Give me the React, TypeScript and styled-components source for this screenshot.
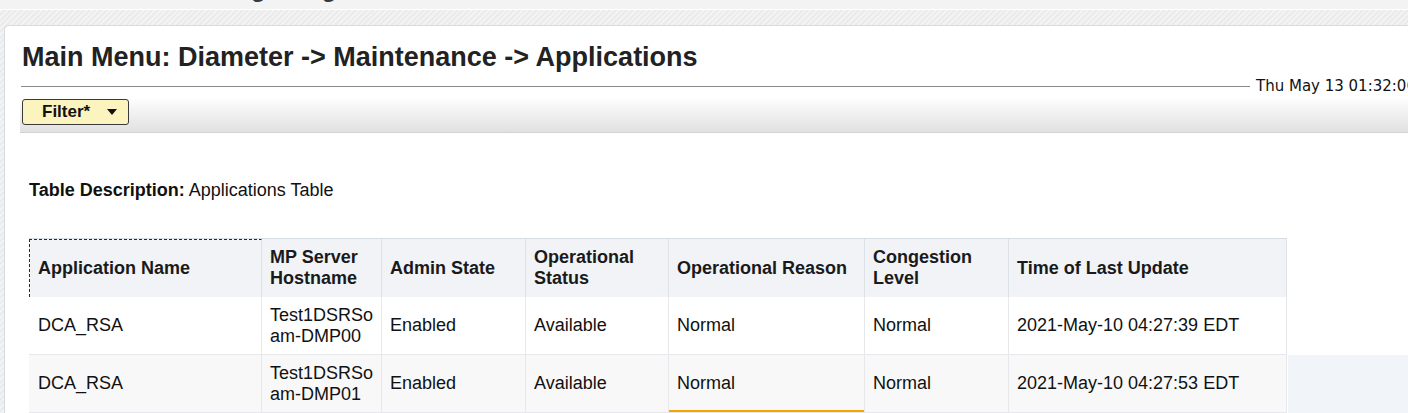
import React from "react";
import styled, { createGlobalStyle } from "styled-components";

const GlobalStyle = createGlobalStyle`
  html, body {
    margin: 0;
    padding: 0;
  }
  body {
    width: 1408px;
    height: 413px;
    overflow: hidden;
    font-family: "Liberation Sans", Arial, sans-serif;
    color: #111;
    background: repeating-linear-gradient(
      -45deg,
      #ebebeb 0px,
      #ebebeb 2px,
      #f3f3f3 2px,
      #f3f3f3 4px
    );
  }
`;

const TopStrip = styled.div`
  height: 9px;
  background: #f3f3f3;
  border-bottom: 1px solid #ffffff;
  overflow: hidden;
`;

const BrandText = styled.div`
  margin-top: -23px;
  padding-left: 119px;
  font-size: 24px;
  line-height: 24px;
  font-weight: bold;
  color: #3a3a3a;
  white-space: nowrap;
`;

const Page = styled.div`
  padding: 15px 0 0 4px;
`;

const Panel = styled.div`
  width: 1404px;
  height: 420px;
  overflow: hidden;
  background: #fff;
  border: 1px solid #d3dbe4;
  border-right: none;
  border-radius: 5px 0 0 0;
  padding: 15px 0 0 16px;
  box-sizing: border-box;
`;

const Title = styled.h1`
  margin: 0 0 0 1px;
  font-size: 27px;
  line-height: 32px;
  font-weight: bold;
  color: #222;
  white-space: nowrap;
`;

const DateRow = styled.div`
  display: flex;
  align-items: center;
  height: 14px;
  margin-top: 6px;
`;

const Rule = styled.div`
  flex: 0 0 1229px;
  height: 1px;
  background: #8a8a8a;
`;

const Stamp = styled.span`
  margin-left: 6px;
  font-family: "DejaVu Sans", Verdana, sans-serif;
  font-size: 15px;
  color: #111;
  white-space: nowrap;
`;

const Toolbar = styled.div`
  margin: 5px 0 0 -1px;
  height: 35px;
  padding: 1px 0 0 2px;
  box-sizing: border-box;
  background: linear-gradient(to bottom, #fefefe 0%, #f2f2f2 40%, #e1e1e1 100%);
  border-bottom: 1px solid #d2d2d2;
`;

const FilterButton = styled.button`
  display: flex;
  align-items: center;
  gap: 17px;
  height: 26px;
  width: 107px;
  padding: 0 0 0 19px;
  box-sizing: border-box;
  background: #fcf4bf;
  border: 1px solid #3a3a3a;
  border-radius: 3px;
  font-family: "Liberation Sans", Arial, sans-serif;
  font-size: 17px;
  font-weight: bold;
  color: #111;
  cursor: pointer;
`;

const Description = styled.p`
  margin: 47px 0 0 8px;
  font-size: 18px;
  line-height: 20px;
  color: #111;

  b {
    font-weight: bold;
  }
`;

const TableWrap = styled.div`
  margin: 38px 0 0 8px;
`;

const Table = styled.table`
  width: 1258px;
  table-layout: fixed;
  border-collapse: separate;
  border-spacing: 0;
  border-top: 1px solid #d6dde5;
  font-size: 18px;
  line-height: 21px;
`;

const HeadCell = styled.th<{ $focused?: boolean }>`
  height: 57px;
  padding: 0 4px 0 8px;
  text-align: left;
  vertical-align: middle;
  font-weight: bold;
  color: #1a1a1a;
  background: #f1f3f7;
  border-right: 1px solid #dde2e8;
  border-top: ${({ $focused }) => ($focused ? "1px dashed #1c1c9c" : "none")};
  border-left: ${({ $focused }) => ($focused ? "1px dashed #1c1c9c" : "none")};
`;

const Row = styled.tr<{ $striped?: boolean }>`
  background: ${({ $striped }) => ($striped ? "#f8f8f8" : "#ffffff")};
`;

const Cell = styled.td<{ $first?: boolean; $marked?: boolean; $hovered?: boolean }>`
  height: 57px;
  padding: 0 4px 0 ${({ $first }) => ($first ? "9px" : "8px")};
  vertical-align: middle;
  color: #111;
  word-break: break-all;
  border-right: 1px solid #e6e8eb;
  border-bottom: 1px solid #e6e8eb;
  box-shadow: ${({ $marked, $hovered }) =>
    $marked
      ? "inset 0 -2px 0 #f5a500"
      : $hovered
      ? "279px 0 0 #f1f4f9"
      : "none"};
`;

const columns = [
  { label: "Application Name", width: 233 },
  { label: "MP Server Hostname", width: 120 },
  { label: "Admin State", width: 144 },
  { label: "Operational Status", width: 143 },
  { label: "Operational Reason", width: 196 },
  { label: "Congestion Level", width: 144 },
  { label: "Time of Last Update", width: 278 },
];

const rows = [
  ["DCA_RSA", "Test1DSRSoam-DMP00", "Enabled", "Available", "Normal", "Normal", "2021-May-10 04:27:39 EDT"],
  ["DCA_RSA", "Test1DSRSoam-DMP01", "Enabled", "Available", "Normal", "Normal", "2021-May-10 04:27:53 EDT"],
];

const Caret = () => (
  <svg width="10" height="6" viewBox="0 0 10 6">
    <polygon points="0,0 10,0 5,6" fill="#111" />
  </svg>
);

export default function App() {
  return (
    <>
      <GlobalStyle />
      <TopStrip>
        <BrandText>Diameter Signaling Router</BrandText>
      </TopStrip>
      <Page>
        <Panel>
          <Title>Main Menu: Diameter -&gt; Maintenance -&gt; Applications</Title>
          <DateRow>
            <Rule />
            <Stamp>Thu May 13 01:32:06 EDT 2021</Stamp>
          </DateRow>
          <Toolbar>
            <FilterButton>
              Filter*
              <Caret />
            </FilterButton>
          </Toolbar>
          <Description>
            <b>Table Description:</b> Applications Table
          </Description>
          <TableWrap>
            <Table>
              <colgroup>
                {columns.map((c) => (
                  <col key={c.label} style={{ width: c.width }} />
                ))}
              </colgroup>
              <thead>
                <tr>
                  {columns.map((c, i) => (
                    <HeadCell key={c.label} $focused={i === 0}>
                      {c.label}
                    </HeadCell>
                  ))}
                </tr>
              </thead>
              <tbody>
                {rows.map((r, ri) => (
                  <Row key={ri} $striped={ri % 2 === 1}>
                    {r.map((v, ci) => (
                      <Cell
                        key={ci}
                        $first={ci === 0}
                        $marked={ri === 1 && ci === 4}
                        $hovered={ri === 1 && ci === r.length - 1}
                      >
                        {v}
                      </Cell>
                    ))}
                  </Row>
                ))}
              </tbody>
            </Table>
          </TableWrap>
        </Panel>
      </Page>
    </>
  );
}
